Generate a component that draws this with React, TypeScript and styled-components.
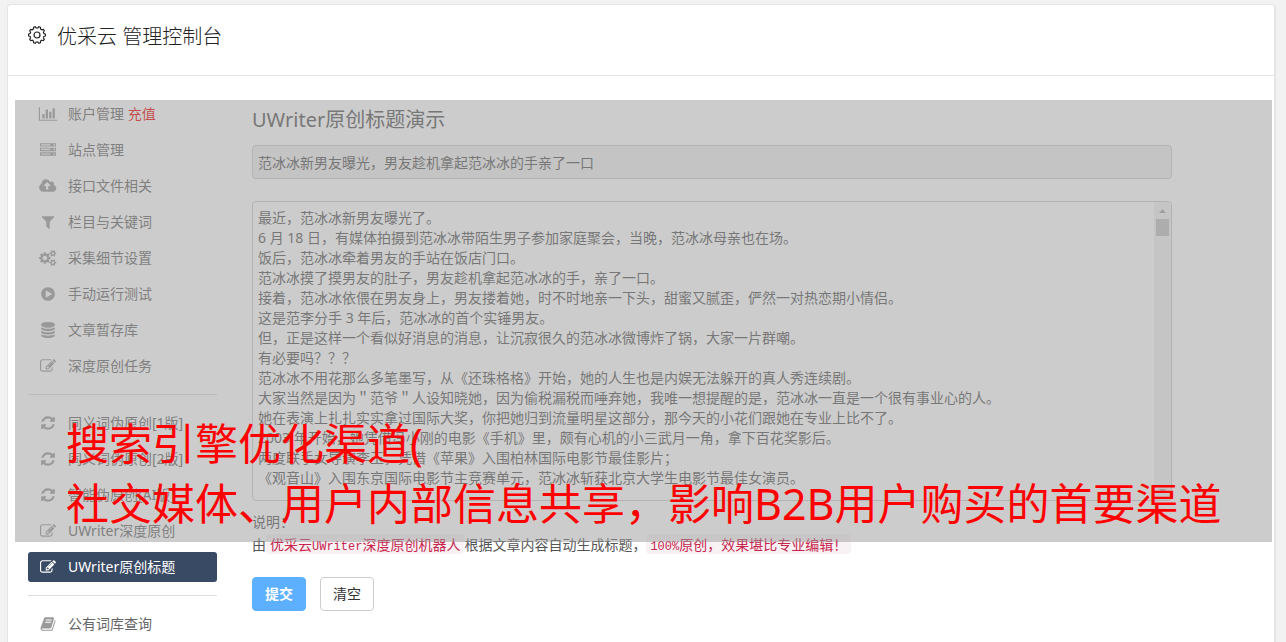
import React from "react";
import styled, { createGlobalStyle } from "styled-components";

const sans = `"Noto Sans", "Noto Sans CJK SC", sans-serif`;

const GlobalStyle = createGlobalStyle`
  *, *::before, *::after { box-sizing: border-box; }
  body {
    margin: 0;
    background: #f2f2f2;
    color: #555;
    font-family: ${sans};
    font-size: 14px;
    line-height: 20px;
    overflow: hidden;
  }
`;

const Page = styled.div`
  padding: 4px 10px 0 7px;
  height: 100vh;
  overflow: hidden;
`;

const Card = styled.div`
  position: relative;
  min-height: 100vh;
  background: #fff;
  border: 1px solid #e5e5e5;
  border-right-width: 2px;
  border-radius: 4px;
`;

const CardHeader = styled.header`
  display: flex;
  align-items: flex-start;
  gap: 11px;
  height: 71px;
  padding: 17px 20px;
  border-bottom: 1px solid #e5e5e5;
`;

const CardTitle = styled.h1`
  margin: 0;
  color: #222;
  font-size: 20px;
  font-weight: 300;
  line-height: 30px;
`;

const CardBody = styled.div`
  display: flex;
  align-items: flex-start;
  gap: 35px;
  padding: 23px 0 0 20px;
`;

const Sidebar = styled.nav`
  display: flex;
  flex: none;
  flex-direction: column;
  gap: 6px;
  width: 189px;
`;

const NavLink = styled.a<{ $active?: boolean }>`
  display: flex;
  align-items: center;
  gap: 10px;
  height: 30px;
  padding: 0 10px;
  border-radius: 3px;
  background: ${(p) => (p.$active ? "#394a64" : "transparent")};
  color: ${(p) => (p.$active ? "#fff" : "#666")};
  text-decoration: none;
  white-space: nowrap;

  svg {
    flex: none;
    width: 20px;
    height: 16px;
    fill: ${(p) => (p.$active ? "#fff" : "#999")};
  }
`;

const Recharge = styled.span`
  color: #f00000;
`;

const Divider = styled.hr`
  width: 100%;
  margin: 7px 0;
  border: 0;
  border-top: 1px solid #ddd;
`;

const Main = styled.main`
  flex: 1;
  min-width: 0;
`;

const Form = styled.form`
  width: 90%;
`;

const SectionTitle = styled.h2`
  margin: 0 0 10px;
  padding-top: 6px;
  font-size: 20px;
  font-weight: 400;
  line-height: 30px;
`;

const TitleInput = styled.input`
  display: block;
  width: 100%;
  height: 34px;
  margin-bottom: 22px;
  padding: 6px 5px;
  border: 1px solid #ccc;
  border-radius: 4px;
  background: #eee;
  color: #555;
  font: inherit;
`;

const ArticleBox = styled.div`
  display: flex;
  height: 300px;
  border: 1px solid #ccc;
  border-radius: 4px;
  overflow: hidden;
`;

const ArticleInput = styled.textarea`
  flex: 1;
  min-width: 0;
  padding: 6px 5px;
  border: 0;
  background: transparent;
  color: #555;
  font: inherit;
  resize: none;
  overflow: hidden;
`;

const ScrollTrack = styled.div`
  display: flex;
  flex-direction: column;
  align-items: center;
  width: 17px;
  padding: 7px 0;
  background: #f1f1f1;
`;

const ScrollArrow = styled.svg`
  width: 7px;
  height: 4px;
  fill: #a3a3a3;
`;

const ScrollThumb = styled.div`
  width: 13px;
  height: 17px;
  margin: 6px 0 auto;
  background: #c1c1c1;
`;

const Note = styled.p`
  margin: 9px 0 21px;
  line-height: 23px;
  white-space: nowrap;
`;

const Code = styled.code`
  padding: 0 4px;
  border-radius: 4px;
  background: #f9f2f4;
  color: #c7254e;
  font-family: "Noto Sans CJK SC", sans-serif;
  font-size: 14px;
  line-height: 16px;
`;

const Latin = styled.span`
  font-family: "Liberation Mono", monospace;
  font-size: 12px;
`;

const Actions = styled.div`
  display: flex;
  gap: 14px;
`;

const Button = styled.button<{ $primary?: boolean }>`
  width: 54px;
  height: 34px;
  padding: 0;
  border: 1px solid ${(p) => (p.$primary ? "#5cb0ff" : "#ccc")};
  border-radius: 4px;
  background: ${(p) => (p.$primary ? "#5cb0ff" : "#fff")};
  color: ${(p) => (p.$primary ? "#fff" : "#333")};
  font: inherit;
  font-weight: ${(p) => (p.$primary ? 700 : 400)};
`;

const Banner = styled.div`
  position: absolute;
  top: 95px;
  left: 7px;
  right: 2px;
  display: flex;
  align-items: flex-end;
  height: 442px;
  padding: 0 0 8px 51px;
  background: rgba(153, 153, 153, 0.5);
  color: #f00;
  font-size: 43px;
  line-height: 60px;
  white-space: nowrap;
  pointer-events: none;
`;

const icons = {
  chart: { w: 2048, d: "M640 896v512h-256v-512h256zm384-512v1024h-256v-1024h256zm1024 1152v128h-2048v-1536h128v1408h1920zm-640-896v768h-256v-768h256zm384-384v1152h-256v-1152h256z" },
  server: { w: 1792, d: "M128 1408h1024v-128h-1024v128zm0-512h1024v-128h-1024v128zm1568 448q0-40-28-68t-68-28-68 28-28 68 28 68 68 28 68-28 28-68zm-1568-960h1024v-128h-1024v128zm1568 448q0-40-28-68t-68-28-68 28-28 68 28 68 68 28 68-28 28-68zm0-512q0-40-28-68t-68-28-68 28-28 68 28 68 68 28 68-28 28-68zm96 832v384h-1792v-384h1792zm0-512v384h-1792v-384h1792zm0-512v384h-1792v-384h1792z" },
  cloud: { w: 1856, d: "M1216 864q0-14-9-23l-352-352q-9-9-23-9t-23 9l-351 351q-10 12-10 24 0 14 9 23t23 9h224v352q0 13 9.5 22.5t22.5 9.5h192q13 0 22.5-9.5t9.5-22.5v-352h224q13 0 22.5-9.5t9.5-22.5zm640 288q0 159-112.5 271.5t-271.5 112.5h-1088q-185 0-316.5-131.5t-131.5-316.5q0-130 70-240t188-165q-2-30-2-43 0-212 150-362t362-150q156 0 285.5 87t188.5 231q71-62 166-62 106 0 181 75t75 181q0 76-41 138 130 31 213.5 135.5t83.5 238.5z" },
  filter: { w: 1792, d: "M1595 295q17 41-14 70l-493 493v742q0 42-39 59-13 5-25 5-27 0-45-19l-256-256q-19-19-19-45v-486l-493-493q-31-29-14-70 17-39 59-39h1280q42 0 59 39z" },
  cogs: { w: 1856, d: "M832 896q0-106-75-181t-181-75-181 75-75 181 75 181 181 75 181-75 75-181zm768 512q0-52-38-90t-90-38-90 38-38 90q0 53 37.5 90.5t90.5 37.5 90.5-37.5 37.5-90.5zm0-1024q0-52-38-90t-90-38-90 38-38 90q0 53 37.5 90.5t90.5 37.5 90.5-37.5 37.5-90.5zm-384 421v185q0 10-7 19.5t-16 10.5l-155 24q-11 35-32 76 34 48 90 115 7 11 7 20 0 12-7 19-23 30-82.5 89.5t-78.5 59.5q-11 0-21-7l-115-90q-37 19-77 31-11 108-23 155-7 24-30 24h-186q-11 0-20-7.5t-10-17.5l-23-153q-34-10-75-31l-118 89q-7 7-20 7-11 0-21-8-144-133-144-160 0-9 7-19 10-14 41-53t47-61q-23-44-35-82l-152-24q-10-1-17-9.5t-7-19.5v-185q0-10 7-19.5t16-10.5l155-24q11-35 32-76-34-48-90-115-7-11-7-20 0-12 7-20 22-30 82-89t79-59q11 0 21 7l115 90q34-18 77-32 11-108 23-154 7-24 30-24h186q11 0 20 7.5t10 17.5l23 153q34 10 75 31l118-89q8-7 20-7 11 0 21 8 144 133 144 160 0 8-7 19-12 16-42 54t-45 60q23 48 34 82l152 23q10 2 17 10.5t7 19.5zm640 533v140q0 16-149 31-12 27-30 52 51 113 51 138 0 4-4 7-122 71-124 71-8 0-46-47t-52-68q-20 2-30 2t-30-2q-14 21-52 68t-46 47q-2 0-124-71-4-3-4-7 0-25 51-138-18-25-30-52-149-15-149-31v-140q0-16 149-31 13-29 30-52-51-113-51-138 0-4 4-7 4-2 35-20t59-34 30-16q8 0 46 46.5t52 67.5q20-2 30-2t30 2q51-71 92-112l6-2q4 0 124 70 4 3 4 7 0 25-51 138 17 23 30 52 149 15 149 31zm0-1024v140q0 16-149 31-12 27-30 52 51 113 51 138 0 4-4 7-122 71-124 71-8 0-46-47t-52-68q-20 2-30 2t-30-2q-14 21-52 68t-46 47q-2 0-124-71-4-3-4-7 0-25 51-138-18-25-30-52-149-15-149-31v-140q0-16 149-31 13-29 30-52-51-113-51-138 0-4 4-7 4-2 35-20t59-34 30-16q8 0 46 46.5t52 67.5q20-2 30-2t30 2q51-71 92-112l6-2q4 0 124 70 4 3 4 7 0 25-51 138 17 23 30 52 149 15 149 31z" },
  play: { w: 1792, d: "M896 128q209 0 385.5 103t279.5 279.5 103 385.5-103 385.5-279.5 279.5-385.5 103-385.5-103-279.5-279.5-103-385.5 103-385.5 279.5-279.5 385.5-103zm384 823q32-18 32-55t-32-55l-544-320q-31-19-64-1-32 19-32 56v640q0 37 32 56 16 8 32 8 17 0 32-9z" },
  database: { w: 1792, d: "M896 768q237 0 443-43t325-127v170q0 69-103 128t-280 93.5-385 34.5-385-34.5-280-93.5-103-128v-170q119 84 325 127t443 43zm0 768q237 0 443-43t325-127v170q0 69-103 128t-280 93.5-385 34.5-385-34.5-280-93.5-103-128v-170q119 84 325 127t443 43zm0-384q237 0 443-43t325-127v170q0 69-103 128t-280 93.5-385 34.5-385-34.5-280-93.5-103-128v-170q119 84 325 127t443 43zm0-1152q208 0 385 34.5t280 93.5 103 128v128q0 69-103 128t-280 93.5-385 34.5-385-34.5-280-93.5-103-128v-128q0-69 103-128t280-93.5 385-34.5z" },
  edit: { w: 1792, d: "M888 1184l116-116-152-152-116 116v56h96v96h56zm440-720q-16-16-33 1l-350 350q-17 17-1 33t33-1l350-350q17-17 1-33zm80 594v190q0 119-84.5 203.5t-203.5 84.5h-832q-119 0-203.5-84.5t-84.5-203.5v-832q0-119 84.5-203.5t203.5-84.5h832q63 0 117 25 15 7 18 23 3 17-9 29l-49 49q-14 14-32 8-23-6-45-6h-832q-66 0-113 47t-47 113v832q0 66 47 113t113 47h832q66 0 113-47t47-113v-126q0-13 9-22l64-64q15-15 35-7t20 29zm-96-738l288 288-672 672h-288v-288zm444 132l-92 92-288-288 92-92q28-28 68-28t68 28l152 152q28 28 28 68t-28 68z" },
  refresh: { w: 1792, d: "M1639 1056q0 5-1 7-64 268-268 434.5t-478 166.5q-146 0-282.5-55t-243.5-157l-129 129q-19 19-45 19t-45-19-19-45v-448q0-26 19-45t45-19h448q26 0 45 19t19 45-19 45l-137 137q71 66 161 102t187 36q134 0 250-65t186-179q11-17 53-117 8-23 30-23h192q13 0 22.5 9.5t9.5 22.5zm25-800v448q0 26-19 45t-45 19h-448q-26 0-45-19t-19-45 19-45l138-138q-148-137-349-137-134 0-250 65t-186 179q-11 17-53 117-8 23-30 23h-199q-13 0-22.5-9.5t-9.5-22.5v-7q65-268 270-434.5t480-166.5q146 0 284 55.5t245 156.5l130-129q19-19 45-19t45 19 19 45z" },
  book: { w: 1792, d: "M1703 478q40 57 18 129l-275 906q-19 64-76.5 107.5t-122.5 43.5h-923q-77 0-148.5-53.5t-99.5-131.5q-24-67-2-127 0-4 3-27t4-37q1-8-3-21.5t-3-19.5q2-11 8-21t16.5-23.5 16.5-23.5q23-38 45-91.5t30-91.5q3-10 .5-30t-.5-28q3-11 17-28t17-23q21-36 42-92t25-90q1-9-2.5-32t.5-28q4-13 22-30.5t22-22.5q19-26 42.5-84.5t27.5-96.5q1-8-3-25.5t-2-26.5q2-8 9-18t18-23 17-21q8-12 16.5-30.5t15-35 16-36 19.5-32 26.5-23.5 36-11.5 47.5 5.5l-1 3q38-9 51-9h761q74 0 114 56t18 130l-274 906q-36 119-71.5 153.5t-128.5 34.5h-869q-27 0-38 15-11 16-1 43 24 70 144 70h923q29 0 56-15.5t35-41.5l300-987q7-22 5-57 38 15 59 43zm-1064 2q-4 13 2 22.5t20 9.5h608q13 0 25.5-9.5t16.5-22.5l21-64q4-13-2-22.5t-20-9.5h-608q-13 0-25.5 9.5t-16.5 22.5zm-83 256q-4 13 2 22.5t20 9.5h608q13 0 25.5-9.5t16.5-22.5l21-64q4-13-2-22.5t-20-9.5h-608q-13 0-25.5 9.5t-16.5 22.5z" },
};

type IconName = keyof typeof icons;

const Icon = ({ name }: { name: IconName }) => (
  <svg viewBox={`0 0 ${icons[name].w} 1792`} aria-hidden="true">
    <path d={icons[name].d} />
  </svg>
);

/* Ten blunt teeth around a ring. */
const gearOutline = (() => {
  const points: string[] = [];
  for (let i = 0; i < 120; i++) {
    const a = (i / 120) * Math.PI * 2;
    const wave = Math.max(-1, Math.min(1, 2 * Math.cos(10 * a)));
    const r = 7.7 + 0.7 * wave;
    points.push(`${(9 + r * Math.cos(a)).toFixed(2)} ${(9 + r * Math.sin(a)).toFixed(2)}`);
  }
  return `M${points.join("L")}Z`;
})();

const Gear = styled.svg`
  flex: none;
  width: 18px;
  height: 18px;
  margin-top: 4px;
  fill: none;
  stroke: #222;
  stroke-width: 1.2;
`;

const groups: { icon: IconName; label: string; extra?: string; active?: boolean }[][] = [
  [
    { icon: "chart", label: "账户管理", extra: "充值" },
    { icon: "server", label: "站点管理" },
    { icon: "cloud", label: "接口文件相关" },
    { icon: "filter", label: "栏目与关键词" },
    { icon: "cogs", label: "采集细节设置" },
    { icon: "play", label: "手动运行测试" },
    { icon: "database", label: "文章暂存库" },
    { icon: "edit", label: "深度原创任务" },
  ],
  [
    { icon: "refresh", label: "同义词伪原创[1版]" },
    { icon: "refresh", label: "同义词伪原创[2版]" },
    { icon: "refresh", label: "智能伪原创[AI版]" },
    { icon: "edit", label: "UWriter深度原创" },
    { icon: "edit", label: "UWriter原创标题", active: true },
  ],
  [{ icon: "book", label: "公有词库查询" }],
];

const article = `最近，范冰冰新男友曝光了。
6 月 18 日，有媒体拍摄到范冰冰带陌生男子参加家庭聚会，当晚，范冰冰母亲也在场。
饭后，范冰冰牵着男友的手站在饭店门口。
范冰冰摸了摸男友的肚子，男友趁机拿起范冰冰的手，亲了一口。
接着，范冰冰依偎在男友身上，男友搂着她，时不时地亲一下头，甜蜜又腻歪，俨然一对热恋期小情侣。
这是范李分手 3 年后，范冰冰的首个实锤男友。
但，正是这样一个看似好消息的消息，让沉寂很久的范冰冰微博炸了锅，大家一片群嘲。
有必要吗？？？
范冰冰不用花那么多笔墨写，从《还珠格格》开始，她的人生也是内娱无法躲开的真人秀连续剧。
大家当然是因为＂范爷＂人设知晓她，因为偷税漏税而唾弃她，我唯一想提醒的是，范冰冰一直是一个很有事业心的人。
她在表演上扎扎实实拿过国际大奖，你把她归到流量明星这部分，那今天的小花们跟她在专业上比不了。
2003 年开始，她凭借冯小刚的电影《手机》里，颇有心机的小三武月一角，拿下百花奖影后。
两度联手女导演李玉，凭借《苹果》入围柏林国际电影节最佳影片；
《观音山》入围东京国际电影节主竞赛单元，范冰冰斩获北京大学生电影节最佳女演员。`;

export default function App() {
  return (
    <Page>
      <GlobalStyle />
      <Card>
        <CardHeader>
          <Gear viewBox="0 0 18 18" aria-hidden="true">
            <path d={gearOutline} />
            <circle cx="9" cy="9" r="3" />
          </Gear>
          <CardTitle>优采云 管理控制台</CardTitle>
        </CardHeader>
        <CardBody>
          <Sidebar>
            {groups.map((group, g) => (
              <React.Fragment key={g}>
                {g > 0 && <Divider />}
                {group.map((item) => (
                  <NavLink key={item.label} href="#" $active={item.active}>
                    <Icon name={item.icon} />
                    <span>
                      {item.label}
                      {item.extra && <Recharge> {item.extra}</Recharge>}
                    </span>
                  </NavLink>
                ))}
              </React.Fragment>
            ))}
          </Sidebar>
          <Main>
            <Form onSubmit={(e) => e.preventDefault()}>
              <SectionTitle>UWriter原创标题演示</SectionTitle>
              <TitleInput
                aria-label="标题"
                readOnly
                defaultValue="范冰冰新男友曝光，男友趁机拿起范冰冰的手亲了一口"
              />
              <ArticleBox>
                <ArticleInput aria-label="文章内容" defaultValue={article} />
                <ScrollTrack aria-hidden="true">
                  <ScrollArrow viewBox="0 0 7 4"><path d="M0 4L3.5 0L7 4Z" /></ScrollArrow>
                  <ScrollThumb />
                  <ScrollArrow viewBox="0 0 7 4"><path d="M0 0L3.5 4L7 0Z" /></ScrollArrow>
                </ScrollTrack>
              </ArticleBox>
              <Note>
                说明：
                <br />由<Code>优采云<Latin>UWriter</Latin>深度原创机器人</Code>根据文章内容自动生成标题，<Code><Latin>100%</Latin>原创，效果堪比专业编辑！</Code>
              </Note>
              <Actions>
                <Button type="submit" $primary>提交</Button>
                <Button type="reset">清空</Button>
              </Actions>
            </Form>
          </Main>
        </CardBody>
        <Banner>
          <span>
            搜索引擎优化渠道(
            <br />
            社交媒体、用户内部信息共享，影响B2B用户购买的首要渠道
          </span>
        </Banner>
      </Card>
    </Page>
  );
}
